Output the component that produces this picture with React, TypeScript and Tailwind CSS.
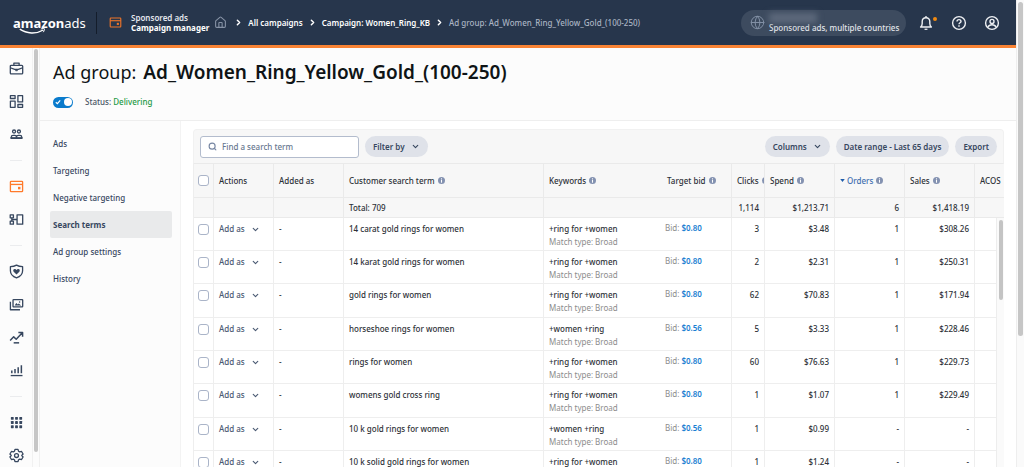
// ============================================================================
// Campaign manager: search terms report of one ad group
// ============================================================================

import { useState } from 'react';
import type { ReactNode } from 'react';
import { ChevronDown, ChevronRight, Globe, House, Search } from 'lucide-react';
import { clsx } from 'clsx';

interface SearchTerm {
  term: string;
  keyword: string;
  bid: string;
  clicks: string;
  spend: string;
  orders: string;
  sales: string;
}

const SEARCH_TERMS: SearchTerm[] = [
  { term: '14 carat gold rings for women', keyword: '+ring for +women', bid: '$0.80', clicks: '3', spend: '$3.48', orders: '1', sales: '$308.26' },
  { term: '14 karat gold rings for women', keyword: '+ring for +women', bid: '$0.80', clicks: '2', spend: '$2.31', orders: '1', sales: '$250.31' },
  { term: 'gold rings for women', keyword: '+ring for +women', bid: '$0.80', clicks: '62', spend: '$70.83', orders: '1', sales: '$171.94' },
  { term: 'horseshoe rings for women', keyword: '+women +ring', bid: '$0.56', clicks: '5', spend: '$3.33', orders: '1', sales: '$228.46' },
  { term: 'rings for women', keyword: '+ring for +women', bid: '$0.80', clicks: '60', spend: '$76.63', orders: '1', sales: '$229.73' },
  { term: 'womens gold cross ring', keyword: '+ring for +women', bid: '$0.80', clicks: '1', spend: '$1.07', orders: '1', sales: '$229.49' },
  { term: '10 k gold rings for women', keyword: '+women +ring', bid: '$0.56', clicks: '1', spend: '$0.99', orders: '-', sales: '-' },
  { term: '10 k solid gold rings for women', keyword: '+ring for +women', bid: '$0.80', clicks: '1', spend: '$1.24', orders: '-', sales: '-' },
];

const MENU = ['Ads', 'Targeting', 'Negative targeting', 'Search terms', 'Ad group settings', 'History'];

// ---------------------------------------------------------------------------
// Icons
// ---------------------------------------------------------------------------

function Icon({ children, className = 'size-[15px]' }: { children: ReactNode; className?: string }) {
  return (
    <svg
      viewBox="0 0 16 16"
      className={className}
      fill="none"
      stroke="currentColor"
      strokeWidth="1.4"
      strokeLinejoin="round"
      aria-hidden="true"
    >
      {children}
    </svg>
  );
}

const CampaignIcon = ({ className }: { className?: string }) => (
  <Icon className={className}>
    <rect x="1.5" y="2.5" width="13" height="11" rx="0.8" />
    <path d="M1.5 5.8h13" />
    <rect x="9.6" y="8.4" width="2.6" height="2.6" fill="currentColor" stroke="none" />
  </Icon>
);

const BriefcaseIcon = () => (
  <Icon>
    <path d="M5.2 4.6V2.2h5.6v2.400" />
    <rect x="1.4" y="4.6" width="13.2" height="9.2" rx="1" />
    <path d="M1.4 7.2 6 9h4l4.600-1.800" />
    <path d="M7 9h2v1.500H7z" fill="currentColor" strokeWidth="0.6" />
  </Icon>
);

const DashboardIcon = () => (
  <Icon>
    <rect x="1.5" y="1.8" width="5" height="3" />
    <rect x="1.5" y="7.6" width="5" height="6.6" />
    <rect x="9.5" y="1.8" width="5" height="6.6" />
    <rect x="9.5" y="11.2" width="5" height="3" />
  </Icon>
);

const AudienceIcon = () => (
  <Icon>
    <circle cx="5.4" cy="4.8" r="1.6" />
    <circle cx="10.6" cy="4.8" r="1.6" />
    <path d="M2.4 12v-1.200c0-1.100.8-1.800 1.900-1.800h1.900c1 0 1.800.7 1.800 1.800V12M8 10.800c0-1.100.8-1.800 1.800-1.800h1.900c1.100 0 1.900.7 1.900 1.800V12" />
    <path d="M1.600 11.800h12.800" strokeWidth="2" />
  </Icon>
);

const FlowIcon = () => (
  <Icon>
    <rect x="1.3" y="3" width="3.4" height="3.2" />
    <rect x="1.3" y="9.8" width="3.4" height="3.2" />
    <rect x="8.6" y="3" width="6" height="10" />
    <path d="M3 6.2v3.600M3 8h5.600" />
  </Icon>
);

const ShieldIcon = () => (
  <Icon>
    <path d="M8 1.200c2 1.200 4.200 1.600 6.500 1.600v4.400c0 3.800-2.500 6.200-6.500 7.600-4-1.400-6.500-3.800-6.500-7.600V2.800C3.800 2.800 6 2.400 8 1.200z" />
    <path
      d="M8 11.200 5 8.200C4 7.100 4.600 5.200 6 5.200c.9 0 1.600.5 2 1.100.4-.6 1.100-1.100 2-1.100 1.400 0 2 1.900 1 3z"
      fill="currentColor"
      stroke="none"
    />
  </Icon>
);

const GalleryIcon = () => (
  <Icon>
    <rect x="4.3" y="2.700" width="10.300" height="7.800" rx="0.6" />
    <path d="M1.500 5v8.600h10.200" />
    <path d="M6 9l1.800-2.600 1.600 1.500 1-.9L13 9z" fill="currentColor" stroke="none" />
    <circle cx="11.300" cy="5.400" r="0.8" fill="currentColor" stroke="none" />
  </Icon>
);

const TrendIcon = () => (
  <Icon>
    <path d="M1.200 11.200 5 7.300l2.700 2.500 6.200-6.600M10 2.700h4.500v4.500" strokeWidth="1.600" />
    <path d="M5 13.700h5.800" strokeWidth="1.600" />
  </Icon>
);

const BarsIcon = () => (
  <Icon>
    <path d="M3 10.900V8M6.400 10.900V6.300M9.800 10.900V4.600M13.200 10.900V2.400" strokeWidth="1.600" />
    <path d="M1.800 13.400h12.600" />
  </Icon>
);

const AppsIcon = () => (
  <Icon>
    {[2, 6.5, 11].map((y) =>
      [2, 6.5, 11].map((x) => (
        <rect key={`${x}-${y}`} x={x} y={y} width="3" height="3" rx="0.5" fill="currentColor" stroke="none" />
      ))
    )}
  </Icon>
);

const GearIcon = () => (
  <Icon>
    <path d="M6.400 1.500h3.200l.6 2 1.200.7 2-.5 1.600 2.700L13.600 8l1.400 1.600-1.600 2.700-2-.5-1.200.7-.6 2H6.400l-.6-2-1.200-.7-2 .5L1 9.600 2.400 8 1 6.400l1.600-2.700 2 .5 1.200-.7z" />
    <circle cx="8" cy="8" r="2.100" />
  </Icon>
);

const BellIcon = () => (
  <Icon className="size-4">
    <path d="M2.600 12h10.800c-1.200-1-1.600-2-1.600-3.600V6.600C11.800 4.300 10.300 2.800 8 2.800S4.200 4.300 4.200 6.600v1.800c0 1.600-.4 2.600-1.600 3.600z" />
    <path d="M8 1v1.800M6.800 13.700c.3.900 2.100.9 2.400 0" />
  </Icon>
);

const HelpIcon = () => (
  <Icon className="size-4">
    <circle cx="8" cy="8" r="6.400" />
    <path d="M6 6.500c0-1.200.8-1.900 2-1.900s2 .7 2 1.800c0 1.300-2 1.400-2 2.900" />
    <path d="M8 10.300v1.400" strokeWidth="1.500" />
  </Icon>
);

const AccountIcon = () => (
  <Icon className="size-4">
    <circle cx="8" cy="8" r="6.400" />
    <circle cx="8" cy="6.400" r="2" />
    <path d="M4 12.200c.6-1.600 2-2.400 4-2.400s3.400.8 4 2.400" />
  </Icon>
);

const InfoIcon = () => (
  <svg viewBox="0 0 8 8" className="size-[7px] shrink-0" aria-hidden="true">
    <circle cx="4" cy="4" r="4" fill="#8492b1" />
    <rect x="3.4" y="3.3" width="1.2" height="3.2" fill="#fff" />
    <rect x="3.4" y="1.5" width="1.2" height="1.2" fill="#fff" />
  </svg>
);

// ---------------------------------------------------------------------------
// Header
// ---------------------------------------------------------------------------

function Logo() {
  return (
    <a href="#home" className="relative block w-[71px] text-[13px] leading-5 text-white">
      <span className="font-bold">amazon</span>
      <span>ads</span>
      <svg viewBox="0 0 34 8" className="absolute top-[15px] left-[6px] h-[7px] w-[28px]" fill="none" stroke="#fff" aria-hidden="true">
        <path d="M1 1.200c8 5.600 20 6.200 28.500 1" strokeWidth="1.700" />
        <path d="M26.500 1c2-.8 4-.9 4.300-.4.300.6-.2 2.600-1.300 4.200" strokeWidth="1.200" />
      </svg>
    </a>
  );
}

function Header() {
  return (
    <header className="flex h-12 shrink-0 items-center border-b-[3px] border-[#f98334] bg-[#27364c] pr-4 pl-[13px] text-white">
      <Logo />
      <div className="ml-3 h-[22px] w-px bg-[#141d2b]" />
      <CampaignIcon className="ml-3 size-[13px] text-[#ee7429]" />
      <div className="ml-[9px] text-[8px] leading-[10px]">
        <p className="font-semibold text-[#e4e7ec]">Sponsored ads</p>
        <p className="font-bold">Campaign manager</p>
      </div>

      <nav aria-label="Breadcrumb" className="flex items-center gap-[5px] text-[8px] font-semibold whitespace-nowrap">
        <a href="#home" aria-label="Home" className="ml-[5px] text-[#8793a6]">
          <House className="size-[13px]" strokeWidth={2} />
        </a>
        <ChevronRight className="ml-[2px] size-[9px]" strokeWidth={4} />
        <a href="#campaigns">All campaigns</a>
        <ChevronRight className="size-[9px]" strokeWidth={4} />
        <a href="#campaign">Campaign: Women_Ring_KB</a>
        <ChevronRight className="size-[9px]" strokeWidth={4} />
        <span className="font-medium text-[#a9b3c2]">Ad group: Ad_Women_Ring_Yellow_Gold_(100-250)</span>
      </nav>

      <button type="button" className="ml-auto flex h-[26px] w-[165px] items-center gap-1 rounded-full bg-[#3d4b5f] pl-[9px] text-left">
        <Globe className="size-[15px] shrink-0 text-[#8290a5]" strokeWidth={1.6} />
        <span className="text-[8px] leading-[10px] font-medium whitespace-nowrap text-[#e1e5ea]">
          <span className="block h-[10px] w-12 bg-[#5d697c] blur-[3px]" />
          Sponsored ads, multiple countries
        </span>
      </button>
      <div className="ml-3 flex items-center gap-[17px] text-[#eef0f3]">
        <button type="button" aria-label="Notifications" className="relative">
          <BellIcon />
          <span className="absolute top-[2px] -right-[3px] size-1 rounded-full bg-[#f08a11]" />
        </button>
        <button type="button" aria-label="Help">
          <HelpIcon />
        </button>
        <button type="button" aria-label="Account">
          <AccountIcon />
        </button>
      </div>
    </header>
  );
}

// ---------------------------------------------------------------------------
// Icon rail
// ---------------------------------------------------------------------------

const RAIL_GROUPS = [
  [
    { name: 'Portfolio', icon: <BriefcaseIcon /> },
    { name: 'Dashboard', icon: <DashboardIcon /> },
    { name: 'Audiences', icon: <AudienceIcon /> },
  ],
  [
    { name: 'Campaign manager', icon: <CampaignIcon className="size-[15px]" />, active: true },
    { name: 'Planning', icon: <FlowIcon /> },
  ],
  [
    { name: 'Brand safety', icon: <ShieldIcon /> },
    { name: 'Creatives', icon: <GalleryIcon /> },
    { name: 'Insights', icon: <TrendIcon /> },
    { name: 'Reporting', icon: <BarsIcon /> },
  ],
  [
    { name: 'All products', icon: <AppsIcon /> },
    { name: 'Settings', icon: <GearIcon /> },
  ],
];

function IconRail() {
  return (
    <aside className="flex w-10 shrink-0 overflow-hidden border-r border-[#f0f0f0] bg-[#fcfcfc]">
      <nav aria-label="Products" className="flex w-[33px] flex-col items-center border-r border-[#f1f1f1] pt-1">
        {RAIL_GROUPS.map((group, i) => (
          <div key={i} className="flex flex-col items-center">
            {i > 0 && <div className="my-[9px] h-px w-3 bg-[#ebecee]" />}
            {group.map((item) => (
              <button
                key={item.name}
                type="button"
                aria-label={item.name}
                className={clsx(
                  'flex h-[33px] w-8 items-center justify-center',
                  'active' in item && item.active ? 'text-[#ff7a2b]' : 'text-[#37475f]'
                )}
              >
                {item.icon}
              </button>
            ))}
          </div>
        ))}
      </nav>
      <div className="mt-px ml-px mb-[15px] w-1 rounded-full bg-[#c6c6c6]" />
    </aside>
  );
}

// ---------------------------------------------------------------------------
// Search terms table
// ---------------------------------------------------------------------------

function Pill({ children, chevron = false }: { children: ReactNode; chevron?: boolean }) {
  return (
    <button
      type="button"
      className="flex h-[21px] items-center gap-[6px] rounded-full bg-[#dfe2e9] px-2 text-[8px] font-semibold whitespace-nowrap text-[#37475f]"
    >
      {children}
      {chevron && <ChevronDown className="size-[9px]" strokeWidth={3} />}
    </button>
  );
}

interface CheckboxProps {
  label: string;
  checked: boolean;
  onChange: () => void;
}

function Checkbox({ label, checked, onChange }: CheckboxProps) {
  return (
    <input
      type="checkbox"
      aria-label={label}
      checked={checked}
      onChange={onChange}
      className="mx-auto block size-[11px] appearance-none rounded-[3px] border border-[#aab4c8] bg-white checked:bg-[#0077c8]"
    />
  );
}

function HeadCell({ children, info = true, border = true }: {
  children: ReactNode;
  info?: boolean;
  border?: boolean;
}) {
  return (
    <th scope="col" className={clsx('overflow-hidden px-[5px] font-medium', border && 'border-r border-[#eaeaea]')}>
      <span className="flex items-center gap-[3px]">
        {children}
        {info && <InfoIcon />}
      </span>
    </th>
  );
}

function TermsTable() {
  const [selected, setSelected] = useState<string[]>([]);
  const allSelected = selected.length === SEARCH_TERMS.length;

  const toggle = (term: string) => {
    setSelected(selected.includes(term) ? selected.filter((t) => t !== term) : [...selected, term]);
  };

  const cell = 'border-r border-[#eeeeee] px-[5px] pt-[5px] align-top';
  const total = 'border-r border-[#eaeaea] px-[5px]';

  return (
    <div className="relative overflow-hidden border-l border-[#eeeeee]">
      <table className="w-full table-fixed border-separate border-spacing-0 text-left text-[8px] leading-3 font-medium text-[#2d3137]">
        <colgroup>
          <col className="w-[20px]" />
          <col className="w-[60px]" />
          <col className="w-[70px]" />
          <col />
          <col className="w-[118px]" />
          <col className="w-[70px]" />
          <col className="w-[33px]" />
          <col className="w-[70px]" />
          <col className="w-[70px]" />
          <col className="w-[70px]" />
          <col className="w-[29px]" />
        </colgroup>
        <thead className="bg-[#f7f7f7]">
          <tr className="h-[34px] [&>th]:border-b [&>th]:border-[#eaeaea]">
            <th scope="col" className="border-r border-[#eaeaea]">
              <Checkbox
                label="Select all search terms"
                checked={allSelected}
                onChange={() => setSelected(allSelected ? [] : SEARCH_TERMS.map((t) => t.term))}
              />
            </th>
            <HeadCell info={false}>Actions</HeadCell>
            <HeadCell info={false}>Added as</HeadCell>
            <HeadCell>Customer search term</HeadCell>
            <HeadCell border={false}>Keywords</HeadCell>
            <HeadCell>Target bid</HeadCell>
            <HeadCell>Clicks</HeadCell>
            <HeadCell>Spend</HeadCell>
            <HeadCell>
              <button type="button" className="flex items-center gap-[2px] text-[#3f6fb0]">
                <svg viewBox="0 0 6 4" className="h-[3px] w-[5px]" aria-hidden="true">
                  <path d="M0 0h6L3 4z" fill="#1d5cab" />
                </svg>
                Orders
              </button>
            </HeadCell>
            <HeadCell>Sales</HeadCell>
            <HeadCell border={false}>ACOS</HeadCell>
          </tr>
          <tr className="h-5 [&>td]:border-b [&>td]:border-[#eaeaea]">
            <td className={total} />
            <td className={total} />
            <td className={total} />
            <td className={total}>Total: 709</td>
            <td />
            <td className={total} />
            <td className={clsx(total, 'text-right')}>1,114</td>
            <td className={clsx(total, 'text-right')}>$1,213.71</td>
            <td className={clsx(total, 'text-right')}>6</td>
            <td className={clsx(total, 'text-right')}>$1,418.19</td>
            <td />
          </tr>
        </thead>
        <tbody className="bg-white">
          {SEARCH_TERMS.map((row) => (
            <tr key={row.term} className="h-[33px] nth-[3n]:h-[34px] [&>td]:border-b [&>td]:border-[#eeeeee]">
              <td className="border-r border-[#eeeeee] pt-[6px] align-top">
                <Checkbox
                  label={`Select ${row.term}`}
                  checked={selected.includes(row.term)}
                  onChange={() => toggle(row.term)}
                />
              </td>
              <td className={cell}>
                <button type="button" className="flex items-center gap-[6px] text-[#4a5a73]">
                  Add as
                  <ChevronDown className="size-[9px]" strokeWidth={3} />
                </button>
              </td>
              <td className={cell}>-</td>
              <td className={cell}>{row.term}</td>
              <td className="px-[5px] pt-[5px] align-top">
                {row.keyword}
                <span className="block pt-px font-normal text-[#8c8c8c]">Match type: Broad</span>
              </td>
              <td className="border-r border-[#eeeeee] px-[3px] pt-1 align-top font-normal text-[#8c8c8c]">
                Bid:{' '}
                <a href="#bid" className="font-semibold text-[#1a80d2]">
                  {row.bid}
                </a>
              </td>
              <td className={clsx(cell, 'text-right')}>{row.clicks}</td>
              <td className={clsx(cell, 'text-right')}>{row.spend}</td>
              <td className={clsx(cell, 'text-right')}>{row.orders}</td>
              <td className={clsx(cell, 'text-right')}>{row.sales}</td>
              <td />
            </tr>
          ))}
        </tbody>
      </table>

      {/* Scrollbar of the table body */}
      <div className="absolute top-[54px] right-0 bottom-0 w-2 border-l border-[#ededed] bg-[#fafafa] pt-[2px]">
        <div className="mx-auto h-20 w-1 rounded-full bg-[#c4c4c4]" />
      </div>
    </div>
  );
}

function SearchTerms() {
  return (
    <section className="min-w-0 flex-1 bg-white pt-2 pr-3 pl-3">
      <div className="flex h-[35px] items-center gap-[6px] rounded-t-sm border border-b-[#eaeaea] border-[#f1f1f1] bg-[#f7f7f7] px-[6px]">
        <label className="flex h-[22px] w-[159px] items-center gap-[5px] rounded-[3px] border border-[#b3bccd] bg-white px-[7px]">
          <Search className="size-[9px] shrink-0 text-[#7787a3]" strokeWidth={3} />
          <input
            type="text"
            aria-label="Find a search term"
            placeholder="Find a search term"
            className="w-full min-w-0 text-[8px] font-medium outline-none placeholder:text-[#68778f]"
          />
        </label>
        <Pill chevron>Filter by</Pill>
        <div className="ml-auto flex gap-[6px]">
          <Pill chevron>Columns</Pill>
          <Pill>Date range - Last 65 days</Pill>
          <Pill>Export</Pill>
        </div>
      </div>
      <TermsTable />
    </section>
  );
}

// ---------------------------------------------------------------------------
// Page
// ---------------------------------------------------------------------------

export default function App() {
  const [page, setPage] = useState('Search terms');
  const [enabled, setEnabled] = useState(true);

  return (
    <div className="flex h-screen overflow-hidden bg-[#fcfcfc] font-['Noto_Sans','Open_Sans',sans-serif]">
      <div className="flex min-w-0 flex-1 flex-col">
        <Header />
        <div className="flex min-h-0 flex-1">
          <IconRail />
          <main className="flex min-w-0 flex-1 flex-col">
            <div className="border-b border-[#eeeeee] px-[13px] pt-3 pb-3">
              <h1 className="flex items-baseline gap-[7px] text-[18px] leading-6 whitespace-nowrap text-[#0f1416]">
                Ad group: <strong className="text-[19px] font-semibold">Ad_Women_Ring_Yellow_Gold_(100-250)</strong>
              </h1>
              <div className="mt-3 flex h-3 items-center gap-3 text-[8px] font-medium text-[#4a5566]">
                <label className="relative flex h-[11px] w-5 items-center rounded-full bg-[#0a7bcc]">
                  <input
                    type="checkbox"
                    role="switch"
                    aria-label="Ad group enabled"
                    checked={enabled}
                    onChange={() => setEnabled(!enabled)}
                    className="absolute inset-0 appearance-none"
                  />
                  <svg viewBox="0 0 6 6" className="ml-[2px] size-[6px]" fill="none" stroke="#fff" strokeWidth="1.2" aria-hidden="true">
                    <path d="M.8 3.200 2.400 4.600 5.200 1.400" />
                  </svg>
                  <span className="ml-[3px] size-2 rounded-full bg-white" />
                </label>
                <p>
                  Status: <span className="text-[#1d9a45]">Delivering</span>
                </p>
              </div>
            </div>

            <div className="flex min-h-0 flex-1">
              <nav aria-label="Ad group" className="w-[141px] shrink-0 border-r border-[#f3f3f3] pt-[9px] pr-2 pl-[10px]">
                {MENU.map((item) => (
                  <a
                    key={item}
                    href="#section"
                    onClick={() => setPage(item)}
                    className={clsx(
                      'flex h-[27px] items-center rounded-[2px] pl-[3px] text-[8px] text-[#37475f]',
                      item === page ? 'bg-[#e9eaeb] font-bold text-[#232f3f]' : 'font-medium'
                    )}
                  >
                    {item}
                  </a>
                ))}
              </nav>
              <SearchTerms />
            </div>
          </main>
        </div>
      </div>

      {/* Scrollbar of the page */}
      <div className="w-2 shrink-0 border-l border-[#eeeeee] bg-[#fafafa] pt-[2px]">
        <div className="mx-auto h-[334px] w-[5px] rounded-full bg-[#c6c6c6]" />
      </div>
    </div>
  );
}
